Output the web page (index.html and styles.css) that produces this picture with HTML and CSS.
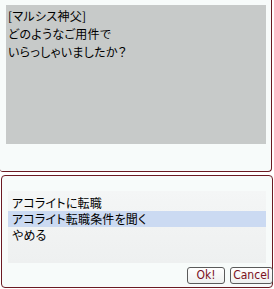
FILE: index.html
```html
<!DOCTYPE html>
<html lang="ja">
<head>
    <meta charset="UTF-8">
    <title>NPC Dialog</title>
    <link rel="stylesheet" href="styles.css">
</head>
<body>
    <div class="talk">
        <div class="message">
            <p>[マルシス神父]</p>
            <p>どのようなご用件で</p>
            <p>いらっしゃいましたか？</p>
        </div>
    </div>

    <div class="menu">
        <ul class="choices">
            <li>アコライトに転職</li>
            <li class="selected">アコライト転職条件を聞く</li>
            <li>やめる</li>
        </ul>
        <div class="buttons">
            <button type="button" class="btn btn-ok">Ok!</button>
            <button type="button" class="btn btn-cancel">Cancel</button>
        </div>
    </div>
</body>
</html>
```

FILE: styles.css
```css
html, body {
    margin: 0;
    padding: 0;
}
body {
    width: 274px;
    height: 289px;
    background: #ffffff;
    font-family: "Noto Sans CJK JP", "Noto Sans", sans-serif;
    font-size: 12px;
    font-feature-settings: "palt";
    color: #000;
    overflow: hidden;
}
.talk {
    box-sizing: border-box;
    width: 272px;
    height: 172px;
    padding: 5px 0 0 6px;
    background: #f7fbfa;
    border-right: 1px solid #6b1a22;
    border-bottom: 1px solid #6b1a22;
    border-radius: 0 0 4px 3px;
}
.message {
    width: 260px;
    height: 139px;
    box-sizing: border-box;
    padding: 2px 0 0 2px;
    background: #c7cac9;
}
.message p {
    margin: 0;
    line-height: 18px;
    letter-spacing: 0.3px;
}
.menu {
    box-sizing: border-box;
    width: 272px;
    height: 113px;
    margin: 3px 0 0 1px;
    padding: 15px 0 0 6px;
    background: #f7fbfa;
    border: 1px solid #6b1a22;
    border-radius: 4px;
}
.choices {
    list-style: none;
    margin: 0;
    padding: 4px 0 20px 0;
    width: 258px;
    background: linear-gradient(#f4f6f6, #eef0f0);
}
.choices li {
    height: 16px;
    line-height: 16px;
    padding-left: 4px;
    letter-spacing: 0.2px;
}
.choices li.selected {
    background: #cbdaf2;
}
.buttons {
    display: flex;
    justify-content: flex-end;
    gap: 5px;
    margin-top: 4px;
    margin-right: -1px;
}
.btn {
    box-sizing: border-box;
    height: 17px;
    padding: 0;
    border: 1px solid #5a5a5a;
    border-radius: 3px;
    background: linear-gradient(#ffffff, #eef0ef);
    color: #7a1020;
    font-family: "DejaVu Sans Condensed", "DejaVu Sans Mono", monospace;
    font-size: 12px;
    line-height: 15px;
    font-feature-settings: normal;
}
.btn-ok {
    width: 38px;
}
.btn-cancel {
    width: 43px;
}
```
